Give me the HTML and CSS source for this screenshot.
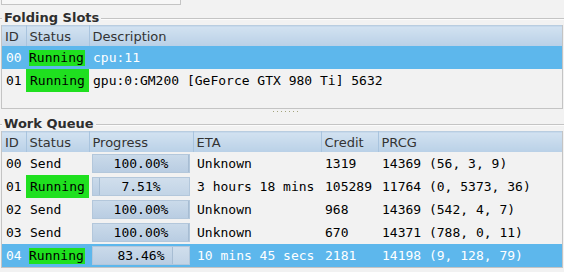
FILE: index.html
```html
<!DOCTYPE html>
<html lang="en">
  <head>
    <meta charset="UTF-8" />
    <meta name="viewport" content="width=device-width, initial-scale=1.0" />
    <title>FAHControl</title>
    <link rel="stylesheet" href="styles.css">
  </head>
  <body>
    <div class="prev"></div>

    <section class="frame slots">
      <div class="frame-head">
        <span class="frame-rule short"></span>
        <span class="frame-label">Folding Slots</span>
        <span class="frame-rule"></span>
      </div>
      <div class="frame-body">
        <table class="grid">
          <colgroup>
            <col class="c-id" />
            <col class="c-status" />
            <col />
          </colgroup>
          <thead>
            <tr>
              <th>ID</th>
              <th>Status</th>
              <th>Description</th>
            </tr>
          </thead>
          <tbody>
            <tr class="selected">
              <td>00</td>
              <td class="running"><span>Running</span></td>
              <td>cpu:11</td>
            </tr>
            <tr>
              <td>01</td>
              <td class="running"><span>Running</span></td>
              <td>gpu:0:GM200 [GeForce GTX 980 Ti] 5632</td>
            </tr>
          </tbody>
        </table>
      </div>
    </section>

    <div class="splitter"><span class="grip"></span></div>

    <section class="frame queue">
      <div class="frame-head">
        <span class="frame-rule short"></span>
        <span class="frame-label">Work Queue</span>
        <span class="frame-rule"></span>
      </div>
      <div class="frame-body">
        <table class="grid">
          <colgroup>
            <col class="c-id" />
            <col class="c-status" />
            <col class="c-progress" />
            <col class="c-eta" />
            <col class="c-credit" />
            <col />
          </colgroup>
          <thead>
            <tr>
              <th>ID</th>
              <th>Status</th>
              <th>Progress</th>
              <th>ETA</th>
              <th>Credit</th>
              <th>PRCG</th>
            </tr>
          </thead>
          <tbody>
            <tr>
              <td>00</td>
              <td>Send</td>
              <td class="progress"><div class="bar"><div class="fill" style="width: 100%"></div><span>100.00%</span></div></td>
              <td>Unknown</td>
              <td>1319</td>
              <td>14369 (56, 3, 9)</td>
            </tr>
            <tr>
              <td>01</td>
              <td class="running"><span>Running</span></td>
              <td class="progress"><div class="bar"><div class="fill" style="width: 7.51%"></div><span>7.51%</span></div></td>
              <td>3 hours 18 mins</td>
              <td>105289</td>
              <td>11764 (0, 5373, 36)</td>
            </tr>
            <tr>
              <td>02</td>
              <td>Send</td>
              <td class="progress"><div class="bar"><div class="fill" style="width: 100%"></div><span>100.00%</span></div></td>
              <td>Unknown</td>
              <td>968</td>
              <td>14369 (542, 4, 7)</td>
            </tr>
            <tr>
              <td>03</td>
              <td>Send</td>
              <td class="progress"><div class="bar"><div class="fill" style="width: 100%"></div><span>100.00%</span></div></td>
              <td>Unknown</td>
              <td>670</td>
              <td>14371 (788, 0, 11)</td>
            </tr>
            <tr class="selected">
              <td>04</td>
              <td class="running"><span>Running</span></td>
              <td class="progress"><div class="bar"><div class="fill" style="width: 83.46%"></div><span>83.46%</span></div></td>
              <td>10 mins 45 secs</td>
              <td>2181</td>
              <td>14198 (9, 128, 79)</td>
            </tr>
          </tbody>
        </table>
      </div>
    </section>
  </body>
</html>
```

FILE: styles.css
```css
body {
  margin: 0;
  background-color: #f2f2f2;
  font-family: "DejaVu Sans", sans-serif;
  font-size: 13px;
  color: #000;
}
.prev {
  width: 178px;
  height: 4px;
  margin-left: 1px;
  border: 1px solid #c4c4c4;
  border-top: none;
  background-color: #f7f7f7;
}
.frame {
  margin: 0 1px;
}
.frame-head {
  display: flex;
  align-items: flex-end;
  margin: 0 -1px;
}
.slots .frame-head {
  padding-top: 5px;
}
.queue .frame-head {
  padding-top: 2px;
}
.frame-label {
  font-weight: bold;
  line-height: 15px;
  padding: 0 2px;
  color: #2e2e2e;
}
.frame-rule {
  flex: 1;
  border-top: 1px solid #c4c4c4;
  border-bottom: 1px solid #fbfbfb;
  margin-bottom: 5px;
}
.frame-rule.short {
  flex: none;
  width: 2px;
}
.frame-body {
  border: 1px solid #c4c4c4;
  border-top: none;
}
.slots .frame-body {
  height: 83px;
}
.grid {
  width: 100%;
  border-collapse: collapse;
  table-layout: fixed;
}
.c-id {
  width: 24px;
}
.c-status {
  width: 63px;
}
.c-progress {
  width: 104px;
}
.c-eta {
  width: 128px;
}
.c-credit {
  width: 57px;
}
.grid th {
  height: 20px;
  padding: 0 3px;
  font-weight: normal;
  text-align: left;
  color: #333;
  border-top: 1px solid #b9cde0;
  border-right: 1px solid #a9c4de;
  background: linear-gradient(to bottom, #d2e2f1, #b9d0e7);
  white-space: nowrap;
}
.grid th:last-child {
  border-right: none;
}
.grid td {
  height: 23px;
  padding: 0 4px;
  font-family: "DejaVu Sans Mono", monospace;
  white-space: nowrap;
  overflow: hidden;
}
.grid tr.selected td {
  background-color: #5db7ec;
  color: #fff;
}
.grid td.running {
  background-color: #1fe01f;
  color: #000;
}
.grid tr.selected td.running {
  background-color: #5db7ec;
  color: #000;
}
.grid tr.selected td.running span {
  background-color: #1fe01f;
  padding: 0 1px 1px 0;
  margin-left: -1px;
}
.grid td.progress {
  padding: 0 3px;
}
.bar {
  position: relative;
  height: 17px;
  border: 1px solid #b3c7db;
  background: linear-gradient(to bottom, #d0deec, #c2d4e6);
  color: #000;
  text-align: center;
  line-height: 17px;
}
.bar .fill {
  height: 100%;
  border-right: 1px solid #a7bdd3;
  box-sizing: border-box;
  background: linear-gradient(to bottom, #cadaea, #b9cde2);
}
.bar span {
  position: absolute;
  left: 0;
  right: 0;
  top: 0;
}
.splitter {
  height: 5px;
  display: flex;
  justify-content: center;
  align-items: center;
}
.grip {
  width: 26px;
  height: 1px;
  margin-left: 8px;
  background: repeating-linear-gradient(to right, #a4a47c 0 1px, transparent 1px 4px);
}
```
